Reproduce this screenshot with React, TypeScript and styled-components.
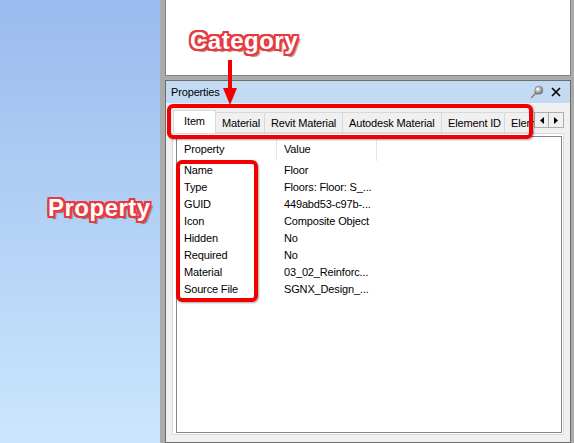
import React from 'react';
import styled, { createGlobalStyle } from 'styled-components';

const GlobalStyle = createGlobalStyle`
  html, body {
    margin: 0;
    padding: 0;
    background: #ababab;
  }
  body {
    font-family: 'Liberation Sans', Arial, sans-serif;
  }
`;

const Screen = styled.div`
  position: relative;
  display: flex;
  width: 574px;
  height: 443px;
  overflow: hidden;
  background: #ababab;
`;

const Backdrop = styled.div`
  width: 160px;
  flex-shrink: 0;
  background: linear-gradient(to bottom, #9bbaee 0%, #b3d1f5 50%, #cbe6fc 100%);
`;

const DockArea = styled.div`
  flex: 1;
  display: flex;
  flex-direction: column;
  gap: 4px;
  padding: 0 3px 0 5px;
`;

const ViewPane = styled.div`
  height: 76px;
  box-sizing: border-box;
  background: #fff;
  border: 1px solid #828282;
  border-top: none;
`;

const DockPanel = styled.div`
  flex: 1;
  display: flex;
  flex-direction: column;
  min-height: 0;
  border: 1px solid #6d6d6d;
  background: #f0f0f0;
  font-size: 11px;
  letter-spacing: -0.15px;
  color: #000;
`;

const TitleBar = styled.div`
  height: 22px;
  display: flex;
  align-items: center;
  padding: 0 6px 0 5px;
  background: #c2dbf3;
`;

const Title = styled.span`
  flex: 1;
`;

const TitleButton = styled.span`
  width: 16px;
  height: 16px;
  display: flex;
  align-items: center;
  justify-content: center;
  margin-left: 3px;
`;

const PanelBody = styled.div`
  flex: 1;
  display: flex;
  flex-direction: column;
  padding: 7px 6px 7px 6px;
  min-height: 0;
`;

const TabHeader = styled.div`
  height: 23px;
  display: flex;
  align-items: flex-end;
  position: relative;
  z-index: 1;
`;

const TabStrip = styled.div`
  display: flex;
  align-items: flex-end;
  width: 361px;
  overflow: hidden;
  padding-left: 1px;
`;

const Tab = styled.div<{ $active?: boolean; $width: number }>`
  flex-shrink: 0;
  box-sizing: border-box;
  width: ${({ $width }) => $width}px;
  height: ${({ $active }) => ($active ? 24 : 21)}px;
  margin-bottom: ${({ $active }) => ($active ? -1 : 0)}px;
  display: flex;
  align-items: center;
  justify-content: ${({ $active }) => ($active ? 'center' : 'flex-start')};
  padding: ${({ $active }) => ($active ? '0 0 4px' : '1px 0 0 6px')};
  white-space: nowrap;
  background: ${({ $active }) => ($active ? '#fff' : '#f0f0f0')};
  border: 1px solid #d9d9d9;
  border-bottom: ${({ $active }) => ($active ? 'none' : '1px solid #d9d9d9')};
  & + & {
    border-left: none;
  }
`;

const Scroller = styled.div`
  display: flex;
  margin: 0 0 5px auto;
`;

const ScrollButton = styled.div`
  width: 15px;
  height: 16px;
  box-sizing: border-box;
  display: flex;
  align-items: center;
  justify-content: center;
  background: #f0f0f0;
  border: 1px solid #adadad;
  & + & {
    border-left: none;
  }
`;

const TabPage = styled.div`
  flex: 1;
  display: flex;
  min-height: 0;
  background: #fff;
  border: 1px solid #d9d9d9;
  padding: 2px 1px 1px 3px;
`;

const ListBox = styled.div`
  flex: 1;
  border: 1px solid #828790;
  background: #fff;
`;

const ListHeader = styled.div`
  height: 24px;
  display: flex;
`;

const HeaderCell = styled.div`
  width: 100px;
  box-sizing: border-box;
  display: flex;
  align-items: center;
  padding-left: 7px;
  border-right: 1px solid #e5e5e5;
`;

const Row = styled.div`
  height: 17px;
  display: flex;
  align-items: center;
`;

const Cell = styled.div`
  width: 100px;
  box-sizing: border-box;
  padding-left: 7px;
  white-space: nowrap;
`;

/* callouts drawn over the panel */

const Callout = styled.div<{ $left: number; $top: number }>`
  position: absolute;
  left: ${({ $left }) => $left}px;
  top: ${({ $top }) => $top}px;
  font-family: 'Liberation Sans', Arial, sans-serif;
  font-weight: bold;
  font-size: 24px;
  line-height: 1;
  color: #fff;
  letter-spacing: 0.5px;
  text-shadow:
    -2px 0 0 #e8393e, 2px 0 0 #e8393e, 0 -2px 0 #e8393e, 0 2px 0 #e8393e,
    -2px -2px 0 #e8393e, 2px -2px 0 #e8393e, -2px 2px 0 #e8393e, 2px 2px 0 #e8393e,
    -1px 2px 0 #e8393e, 1px -2px 0 #e8393e, 3px 3px 1px rgba(90, 40, 40, 0.55);
  z-index: 5;
`;

const Highlight = styled.div<{ $left: number; $top: number; $width: number; $height: number }>`
  position: absolute;
  left: ${({ $left }) => $left}px;
  top: ${({ $top }) => $top}px;
  width: ${({ $width }) => $width}px;
  height: ${({ $height }) => $height}px;
  box-sizing: border-box;
  border: 4px solid #f20000;
  border-radius: 6px;
  box-shadow: 1px 1px 2px rgba(0, 0, 0, 0.35);
  z-index: 4;
`;

const Pointer = styled.svg`
  position: absolute;
  left: 222px;
  top: 60px;
  z-index: 5;
`;

const tabs = [
  { label: 'Item', width: 43 },
  { label: 'Material', width: 49 },
  { label: 'Revit Material', width: 78 },
  { label: 'Autodesk Material', width: 99 },
  { label: 'Element ID', width: 63 },
  { label: 'Element', width: 60 },
];

const properties: [string, string][] = [
  ['Name', 'Floor'],
  ['Type', 'Floors: Floor: S_...'],
  ['GUID', '449abd53-c97b-...'],
  ['Icon', 'Composite Object'],
  ['Hidden', 'No'],
  ['Required', 'No'],
  ['Material', '03_02_Reinforc...'],
  ['Source File', 'SGNX_Design_...'],
];

function PinIcon() {
  return (
    <svg width="14" height="14" viewBox="0 0 14 14">
      <defs>
        <radialGradient id="pinHead" cx="0.35" cy="0.35" r="0.7">
          <stop offset="0" stopColor="#f4f4f4" />
          <stop offset="0.6" stopColor="#a8a8a8" />
          <stop offset="1" stopColor="#6a6a6a" />
        </radialGradient>
      </defs>
      <path d="M1.5 12.5 L5.5 8.5" stroke="#7a7a7a" strokeWidth="1.3" strokeLinecap="round" />
      <path d="M4 7.2 L6.8 10 L7.6 9.2 L5 6.4 Z" fill="#8c8c8c" />
      <circle cx="8.8" cy="5.2" r="4" fill="url(#pinHead)" stroke="#6a6a6a" strokeWidth="0.6" />
      <circle cx="7.8" cy="4.2" r="1.1" fill="#fff" />
    </svg>
  );
}

function CloseIcon() {
  return (
    <svg width="10" height="10" viewBox="0 0 10 10">
      <path d="M1 1 L9 9 M9 1 L1 9" stroke="#000" strokeWidth="1.6" />
    </svg>
  );
}

function Triangle({ dir }: { dir: 'left' | 'right' }) {
  return (
    <svg width="4" height="7" viewBox="0 0 4 7">
      <path d={dir === 'left' ? 'M4 0 L0 3.5 L4 7 Z' : 'M0 0 L4 3.5 L0 7 Z'} fill="#000" />
    </svg>
  );
}

export default function App() {
  return (
    <Screen>
      <GlobalStyle />
      <Backdrop />
      <DockArea>
        <ViewPane />
        <DockPanel>
          <TitleBar>
            <Title>Properties</Title>
            <TitleButton>
              <PinIcon />
            </TitleButton>
            <TitleButton>
              <CloseIcon />
            </TitleButton>
          </TitleBar>
          <PanelBody>
            <TabHeader>
              <TabStrip>
                {tabs.map((t, i) => (
                  <Tab key={t.label} $active={i === 0} $width={t.width}>
                    {t.label}
                  </Tab>
                ))}
              </TabStrip>
              <Scroller>
                <ScrollButton>
                  <Triangle dir="left" />
                </ScrollButton>
                <ScrollButton>
                  <Triangle dir="right" />
                </ScrollButton>
              </Scroller>
            </TabHeader>
            <TabPage>
              <ListBox>
                <ListHeader>
                  <HeaderCell>Property</HeaderCell>
                  <HeaderCell>Value</HeaderCell>
                </ListHeader>
                {properties.map(([name, value]) => (
                  <Row key={name}>
                    <Cell>{name}</Cell>
                    <Cell>{value}</Cell>
                  </Row>
                ))}
              </ListBox>
            </TabPage>
          </PanelBody>
        </DockPanel>
      </DockArea>

      <Callout $left={190} $top={29}>Category</Callout>
      <Pointer width="16" height="46" viewBox="0 0 16 46">
        <path d="M8 0 V30" stroke="#f20000" strokeWidth="4" />
        <path d="M1 28 L15 28 L8 45 Z" fill="#f20000" />
      </Pointer>
      <Highlight $left={167} $top={104} $width={366} $height={35} />
      <Callout $left={48} $top={196}>Property</Callout>
      <Highlight $left={176} $top={160} $width={82} $height={142} />
    </Screen>
  );
}
